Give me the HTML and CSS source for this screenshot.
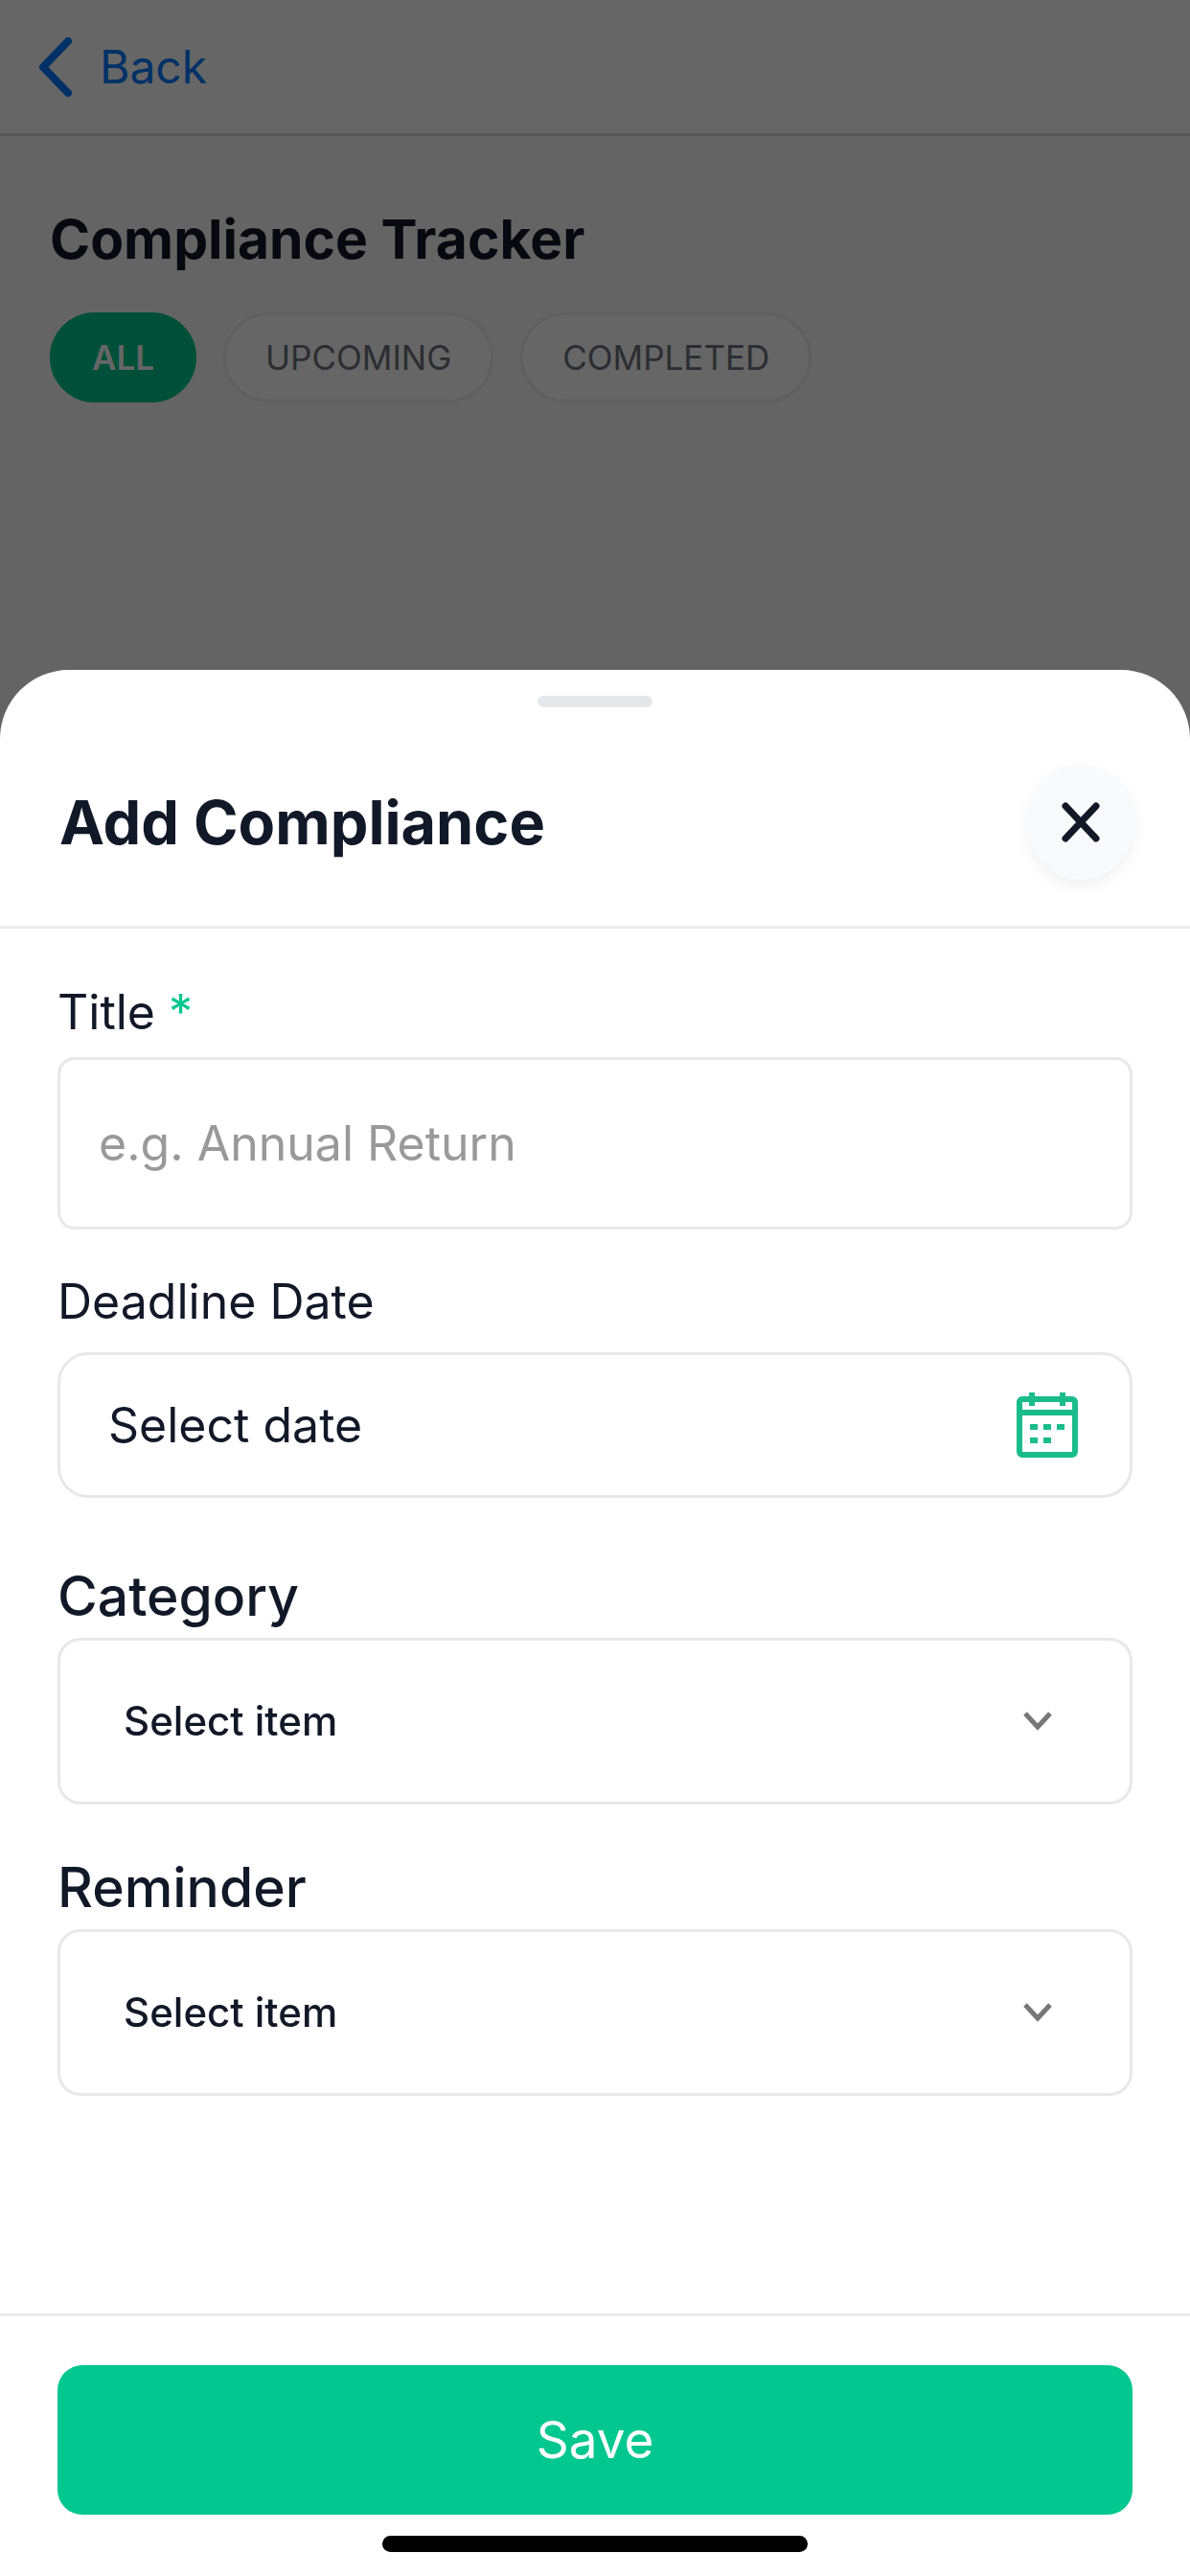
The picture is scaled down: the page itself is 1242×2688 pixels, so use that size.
FILE: index.html
```html
<!DOCTYPE html>
<html lang="en">
<head>
  <meta charset="UTF-8" />
  <meta name="viewport" content="width=device-width, initial-scale=1.0"/>
  <title>Compliance Tracker</title>
  <link rel="stylesheet" href="styles.css">
</head>
<body>

<div class="page">
  <header class="navbar">
    <a href="#" class="back-link">
      <svg class="back-icon" viewBox="0 0 36 64" aria-hidden="true">
        <path d="M31 5 L5 32 L31 59" />
      </svg>
      Back
    </a>
  </header>

  <main class="tracker">
    <h1 class="tracker-title">Compliance Tracker</h1>
    <div class="filters">
      <button type="button" class="filter active">ALL</button>
      <button type="button" class="filter">UPCOMING</button>
      <button type="button" class="filter">COMPLETED</button>
    </div>
  </main>
</div>

<div class="overlay">
  <form class="sheet" id="complianceForm">
    <div class="sheet-handle"></div>

    <div class="sheet-header">
      <h2 class="sheet-title">Add Compliance</h2>
      <button type="button" class="close-btn" aria-label="Close">
        <svg class="close-icon" viewBox="0 0 40 42" aria-hidden="true">
          <path d="M4 4 L36 38 M36 4 L4 38" />
        </svg>
      </button>
    </div>

    <div class="sheet-body">
      <div class="field">
        <label class="label" for="title">Title <span class="required">*</span></label>
        <input type="text" class="control title-input" id="title" placeholder="e.g. Annual Return" />
      </div>

      <div class="field date-field">
        <label class="label" for="deadline">Deadline Date</label>
        <div class="control-wrap">
          <input type="text" class="control date-input" id="deadline" placeholder="Select date" />
          <svg class="calendar-icon" viewBox="0 0 64 68" aria-hidden="true">
            <rect x="3" y="7" width="58" height="58" rx="3" />
            <path d="M3 21 H61 M16 0 V14 M48 0 V14" />
            <path d="M14 36 H22 M28 36 H36 M42 36 H50 M14 50 H22 M28 50 H36" />
          </svg>
        </div>
      </div>

      <div class="field select-field">
        <label class="label" for="category">Category</label>
        <div class="control-wrap">
          <select class="control select" id="category">
            <option>Select item</option>
          </select>
          <svg class="select-icon" viewBox="0 0 30 20" aria-hidden="true">
            <path d="M2 2 L15 16 L28 2" />
          </svg>
        </div>
      </div>

      <div class="field select-field">
        <label class="label" for="reminder">Reminder</label>
        <div class="control-wrap">
          <select class="control select" id="reminder">
            <option>Select item</option>
          </select>
          <svg class="select-icon" viewBox="0 0 30 20" aria-hidden="true">
            <path d="M2 2 L15 16 L28 2" />
          </svg>
        </div>
      </div>
    </div>

    <div class="sheet-footer">
      <button type="submit" class="save-btn">Save</button>
      <div class="home-indicator"></div>
    </div>
  </form>
</div>

</body>
</html>
```
FILE: styles.css
```css
* {
  box-sizing: border-box;
}

body {
  margin: 0;
  font-family: Inter, "Liberation Sans", sans-serif;
  color: #111827;
  background: #fafafa;
}

button,
input,
select {
  font-family: inherit;
  color: inherit;
}

svg {
  fill: none;
  stroke: currentColor;
}

.navbar {
  height: 142px;
  padding: 0 40px;
  display: flex;
  align-items: center;
  background: #fff;
  border-bottom: 3px solid #d8d8d8;
}

.back-link {
  display: flex;
  align-items: center;
  gap: 28px;
  font-size: 48px;
  line-height: 60px;
  color: #007aff;
  text-decoration: none;
}

.back-icon {
  width: 36px;
  height: 64px;
  stroke-width: 8;
  stroke-linecap: round;
  stroke-linejoin: round;
}

.tracker {
  padding: 72px 52px;
}

.tracker-title {
  margin: 0 0 40px;
  font-size: 57px;
  line-height: 72px;
  font-weight: 700;
  color: #111827;
}

.filters {
  display: flex;
  gap: 28px;
}

.filter {
  height: 94px;
  padding: 0 41px;
  border: 3px solid #ededed;
  border-radius: 47px;
  background: #fff;
  font-size: 35px;
  color: #6b7280;
}

.filter.active {
  background: #02c78f;
  border-color: #02c78f;
  color: #fff;
  font-weight: 600;
}

.overlay {
  position: fixed;
  inset: 0;
  display: flex;
  align-items: flex-end;
  background: rgba(0, 0, 0, 0.6);
}

.sheet {
  width: 100%;
  height: 74vh;
  display: flex;
  flex-direction: column;
  background: #fff;
  border-radius: 72px 72px 0 0;
}

.sheet-handle {
  width: 120px;
  height: 12px;
  margin: 27px auto 0;
  border-radius: 6px;
  background: #e5e7eb;
}

.sheet-header {
  display: flex;
  align-items: center;
  justify-content: space-between;
  padding: 60px 58px 48px 62px;
  border-bottom: 3px solid #ebebeb;
}

.sheet-title {
  margin: 0;
  font-size: 63px;
  line-height: 80px;
  font-weight: 700;
}

.close-btn {
  width: 112px;
  height: 120px;
  padding: 0;
  display: flex;
  align-items: center;
  justify-content: center;
  border: none;
  border-radius: 50%;
  background: #f9fafc;
  box-shadow: 0 6px 16px rgba(0, 0, 0, 0.06);
}

.close-icon {
  width: 40px;
  height: 42px;
  stroke-width: 7;
  stroke-linecap: round;
}

.sheet-body {
  flex: 1;
  padding: 52px 60px 0;
}

.field {
  margin-bottom: 40px;
}

.label {
  display: block;
  margin-bottom: 12px;
  font-size: 50px;
  line-height: 70px;
}

.required {
  color: #02c78f;
}

.control-wrap {
  position: relative;
}

.control {
  display: block;
  width: 100%;
  height: 174px;
  border: 3px solid #e8e8e8;
  border-radius: 24px;
  background: #fff;
}

.title-input {
  height: 180px;
  padding: 0 40px;
  border-radius: 18px;
  font-size: 50px;
}

.title-input::placeholder {
  color: #999;
}

.date-field {
  margin-bottom: 68px;
}

.date-field .label {
  margin-bottom: 18px;
}

.date-input {
  height: 152px;
  padding: 0 50px;
  border-radius: 32px;
  font-size: 50px;
}

.date-input::placeholder {
  color: #111827;
}

.calendar-icon {
  position: absolute;
  top: 42px;
  right: 57px;
  width: 64px;
  height: 68px;
  color: #1abc8b;
  stroke-width: 6;
}

.select-field {
  margin-bottom: 52px;
}

.select-field .label {
  margin-bottom: 8px;
  font-size: 57px;
  font-weight: 500;
}

.select {
  padding: 0 66px;
  appearance: none;
  font-size: 42px;
  font-weight: 500;
}

.select-icon {
  position: absolute;
  top: 77px;
  right: 84px;
  width: 30px;
  height: 20px;
  color: #777;
  stroke-width: 5;
  pointer-events: none;
}

.sheet-footer {
  padding: 51px 60px 25px;
  border-top: 3px solid #ebebeb;
}

.save-btn {
  display: block;
  width: 100%;
  height: 156px;
  border: none;
  border-radius: 26px;
  background: #02c78f;
  color: #fff;
  font-size: 53px;
}

.home-indicator {
  width: 444px;
  height: 17px;
  margin: 22px auto 0;
  border-radius: 9px;
  background: #000;
}
```
